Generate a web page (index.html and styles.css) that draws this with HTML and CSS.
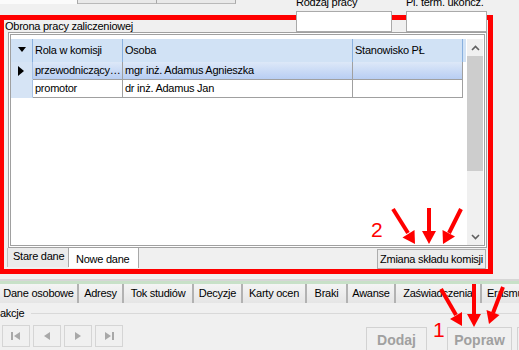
FILE: index.html
```html
<!DOCTYPE html>
<html lang="pl">
<head>
  <meta charset="UTF-8" />
  <meta name="viewport" content="width=device-width, initial-scale=1.0"/>
  <title>Obrona pracy zaliczeniowej</title>
  <link rel="stylesheet" href="styles.css">
</head>
<body>
  <div class="screen">
    <!-- top: form tabs and fields -->
    <div class="head">
      <div class="head-left">
        <div class="top-tabs">
          <div class="ttab ttab-active"></div>
          <div class="ttab"></div>
          <div class="ttab"></div>
        </div>
        <div class="group-title">Obrona pracy zaliczeniowej</div>
      </div>
      <div class="field field-type">
        <span class="field-label">Rodzaj pracy</span>
        <div class="field-box"></div>
      </div>
      <div class="field field-term">
        <span class="field-label">Pl. term. ukończ.</span>
        <div class="field-box"></div>
      </div>
    </div>

    <!-- committee grid -->
    <div class="grid-panel">
      <div class="grid-body">
        <div class="grid-line grid-head">
          <div class="cell cell-ind"><span class="tri-down"></span></div>
          <div class="cell">Rola w komisji</div>
          <div class="cell">Osoba</div>
          <div class="cell">Stanowisko PŁ</div>
        </div>
        <div class="grid-line grid-row row-selected">
          <div class="cell cell-ind"><span class="tri-right"></span></div>
          <div class="cell">przewodniczący komisji</div>
          <div class="cell">mgr inż. Adamus Agnieszka</div>
          <div class="cell"></div>
        </div>
        <div class="grid-line grid-row">
          <div class="cell cell-ind"></div>
          <div class="cell">promotor</div>
          <div class="cell">dr inż. Adamus Jan</div>
          <div class="cell"></div>
        </div>
      </div>
      <div class="scrollbar">
        <div class="sb-btn">
          <svg width="9" height="6" viewBox="0 0 9 6"><polyline points="1,5 4.5,1.5 8,5" fill="none" stroke="#606060" stroke-width="1.6"/></svg>
        </div>
        <div class="sb-thumb"></div>
        <div class="sb-track"></div>
        <div class="sb-btn">
          <svg width="9" height="6" viewBox="0 0 9 6"><polyline points="1,1 4.5,4.5 8,1" fill="none" stroke="#606060" stroke-width="1.6"/></svg>
        </div>
      </div>
    </div>

    <div class="bottom-row">
      <div class="subtab">Stare dane</div>
      <div class="subtab subtab-active">Nowe dane</div>
      <button class="btn-commission">Zmiana składu komisji</button>
    </div>

    <div class="strip-line"></div>

    <div class="main-tabs">
      <div class="mtab" style="width: 79px;">Dane osobowe</div>
      <div class="mtab" style="width: 45px;">Adresy</div>
      <div class="mtab" style="width: 70px;">Tok studiów</div>
      <div class="mtab" style="width: 49px;">Decyzje</div>
      <div class="mtab" style="width: 64px;">Karty ocen</div>
      <div class="mtab" style="width: 41px;">Braki</div>
      <div class="mtab" style="width: 48px;">Awanse</div>
      <div class="mtab" style="width: 86px;">Zaświadczenia</div>
      <div class="mtab mtab-last">Erasmus</div>
    </div>

    <div class="actions-title"><span>akcje</span></div>

    <div class="actions-row">
      <div class="nav">
        <div class="nav-btn">
          <svg width="12" height="10" viewBox="0 0 12 10"><rect x="1" y="1" width="2" height="8" fill="#a8a8a8"/><polygon points="4,5 10,1 10,9" fill="#a8a8a8"/></svg>
        </div>
        <div class="nav-btn">
          <svg width="12" height="10" viewBox="0 0 12 10"><polygon points="3,5 9,1 9,9" fill="#a8a8a8"/></svg>
        </div>
        <div class="nav-btn">
          <svg width="12" height="10" viewBox="0 0 12 10"><polygon points="9,5 3,1 3,9" fill="#a8a8a8"/></svg>
        </div>
        <div class="nav-btn">
          <svg width="12" height="10" viewBox="0 0 12 10"><polygon points="8,5 2,1 2,9" fill="#a8a8a8"/><rect x="9" y="1" width="2" height="8" fill="#a8a8a8"/></svg>
        </div>
      </div>
      <button class="btn-action btn-add">Dodaj</button>
      <button class="btn-action btn-edit">Popraw</button>
      <button class="btn-action btn-more"></button>
    </div>

    <!-- red annotations drawn over the screenshot -->
    <div class="annot-box"></div>
    <svg class="annot-arrows" width="519" height="350" viewBox="0 0 519 350">
      <g stroke="#ff0000" stroke-width="4" fill="none">
        <line x1="393" y1="209" x2="408" y2="233"/>
        <line x1="429" y1="208" x2="429" y2="233"/>
        <line x1="461" y1="209" x2="449" y2="233"/>
        <line x1="441" y1="289" x2="456" y2="315"/>
        <line x1="474" y1="284" x2="474" y2="315"/>
        <line x1="503" y1="287" x2="493" y2="313"/>
      </g>
      <g fill="#ff0000">
        <polygon points="415,244 402.5,237.5 414.5,230"/>
        <polygon points="429,244 422,231 436,231"/>
        <polygon points="443,244 442.5,230 455,236.5"/>
        <polygon points="462,326 450,319 462,312"/>
        <polygon points="474,327 467,314 481,314"/>
        <polygon points="489,324 486.5,310 499.5,315"/>
      </g>
    </svg>
    <span class="annot-num num-2">2</span>
    <span class="annot-num num-1">1</span>
  </div>
</body>
</html>
```

FILE: styles.css
```css
body {
  margin: 0;
  background-color: #f0f0f0;
  font-family: "Liberation Sans", Arial, sans-serif;
  font-size: 11px;
  letter-spacing: -0.25px;
  color: #000;
}

.screen {
  position: relative;
  width: 519px;
  height: 350px;
  overflow: hidden;
}

/* head */
.head {
  display: flex;
  height: 32px;
}

.head-left {
  width: 296px;
  display: flex;
  flex-direction: column;
  justify-content: space-between;
}

.top-tabs {
  display: flex;
  height: 4px;
}

.ttab {
  width: 79px;
  height: 4px;
  box-sizing: border-box;
  background-color: #e9e9e9;
  border-right: 1px solid #a9a9a9;
  border-bottom: 1px solid #b9b9b9;
}

.ttab:first-child {
  width: 78px;
}

.ttab-active {
  background-color: #fbfbfb;
  border-bottom: none;
}

.group-title {
  padding-left: 5px;
  height: 12px;
  line-height: 12px;
}

.field {
  position: relative;
  z-index: 2;
  display: flex;
  flex-direction: column;
  margin-top: -4px;
}

.field-type {
  width: 96px;
}

.field-term {
  width: 81px;
  margin-left: 14px;
}

.field-label {
  height: 12px;
  line-height: 12px;
  margin-bottom: 3px;
  white-space: nowrap;
}

.field-box {
  height: 21px;
  box-sizing: border-box;
  border: 1px solid #aaaaaa;
  background-color: #fff;
}

/* grid */
.grid-panel {
  display: flex;
  margin-left: 8px;
  width: 479px;
  height: 216px;
  box-sizing: border-box;
  border: 3px double #a0a0a0;
  padding-top: 4px;
  background-color: #fff;
}

.grid-body {
  width: 455px;
}

.grid-line {
  display: grid;
  grid-template-columns: 22px 90px 230px 110px;
}

.cell {
  box-sizing: border-box;
  padding-left: 2px;
  white-space: nowrap;
  overflow: hidden;
  text-overflow: ellipsis;
}

.grid-head {
  height: 23px;
  background-color: #d1e2f5;
}

.grid-head .cell {
  line-height: 23px;
  border-right: 1px solid #89b0de;
}

.grid-row {
  height: 18px;
}

.grid-row .cell {
  line-height: 17px;
  border-right: 1px solid #a0a0a0;
  border-bottom: 1px solid #a0a0a0;
}

.grid-row .cell-ind {
  background-color: #d6e4f5;
  border-right-color: #a8c2e4;
  border-bottom-color: #d6e4f5;
}

.row-selected .cell {
  background: linear-gradient(to bottom, #dde8f8, #b8cef3);
}

.row-selected .cell-ind {
  background: #d6e4f5;
}

.cell-ind {
  display: flex;
  align-items: center;
  justify-content: center;
  padding-left: 0;
}

.tri-down {
  width: 0;
  height: 0;
  border-left: 4px solid transparent;
  border-right: 4px solid transparent;
  border-top: 5px solid #000;
  margin-top: -2px;
}

.tri-right {
  width: 0;
  height: 0;
  border-top: 5px solid transparent;
  border-bottom: 5px solid transparent;
  border-left: 6px solid #000;
  margin-left: -2px;
}

.scrollbar {
  display: flex;
  flex-direction: column;
  width: 16px;
  margin-left: 1px;
  background-color: #f0f0f0;
}

.sb-btn {
  height: 17px;
  display: flex;
  align-items: center;
  justify-content: center;
}

.sb-thumb {
  height: 115px;
  background-color: #cdcdcd;
}

.sb-track {
  flex: 1;
}

/* tabs under the grid */
.bottom-row {
  display: flex;
  width: 486px;
  height: 21px;
  box-sizing: border-box;
  padding-left: 7px;
}

.subtab {
  height: 19px;
  box-sizing: border-box;
  width: 62px;
  padding-left: 5px;
  line-height: 17px;
  background-color: #ebebeb;
  border-left: 1px solid #c0c0c0;
  border-right: 1px solid #a8a8a8;
}

.subtab-active {
  width: 70px;
  height: 20px;
  padding-left: 7px;
  line-height: 22px;
  background-color: #fff;
  border-left: none;
}

.btn-commission {
  margin-left: auto;
  margin-top: 1px;
  width: 109px;
  height: 20px;
  padding: 0;
  border: 1px solid #adadad;
  background-color: #ececec;
  font: inherit;
  letter-spacing: inherit;
  color: #000;
}

.strip-line {
  margin-top: 10px;
  height: 3px;
  border-top: 2px solid #d6d6d6;
  background-color: #c8e1c8;
}

.main-tabs {
  display: flex;
  height: 19px;
}

.mtab {
  flex-shrink: 0;
  box-sizing: border-box;
  text-align: center;
  line-height: 19px;
  white-space: nowrap;
  background: linear-gradient(to bottom, #f4f4f4, #e5e5e5);
  border-right: 2px solid #b2b2b2;
}

.mtab-last {
  width: 60px;
  text-align: left;
  padding-left: 5px;
}

.actions-title {
  display: flex;
  align-items: center;
  margin-top: 2px;
  height: 16px;
}

.actions-title::after {
  content: "";
  flex: 1;
  height: 1px;
  margin-left: 7px;
  background-color: #d9d9d9;
}

.actions-row {
  display: flex;
  align-items: flex-start;
  margin-top: 4px;
}

.nav {
  display: flex;
  gap: 3px;
  margin-left: 2px;
}

.nav-btn {
  width: 28px;
  height: 22px;
  box-sizing: border-box;
  border: 1px solid #d5d5d5;
  display: flex;
  align-items: center;
  justify-content: center;
}

.btn-action {
  flex-shrink: 0;
  margin-top: 2px;
  height: 26px;
  padding: 0;
  border: 1px solid #d2d2d2;
  background-color: #f0f0f0;
  font-family: "Liberation Sans", Arial, sans-serif;
  font-size: 14px;
  font-weight: bold;
  color: #a0a0a0;
}

.btn-add {
  width: 61px;
  margin-left: 243px;
}

.btn-edit {
  width: 65px;
  margin-left: 20px;
}

.btn-more {
  width: 40px;
  margin-left: 5px;
}

/* annotations */
.annot-box {
  position: absolute;
  left: -1px;
  top: 15px;
  width: 494px;
  height: 259px;
  box-sizing: border-box;
  border: 5px solid #ff0000;
}

.annot-arrows {
  position: absolute;
  left: 0;
  top: 0;
}

.annot-num {
  position: absolute;
  font-family: "Liberation Sans", Arial, sans-serif;
  font-size: 21px;
  line-height: 21px;
  letter-spacing: 0;
  color: #ff0000;
}

.num-2 {
  left: 371px;
  top: 219px;
}

.num-1 {
  left: 433px;
  top: 319px;
}
```
